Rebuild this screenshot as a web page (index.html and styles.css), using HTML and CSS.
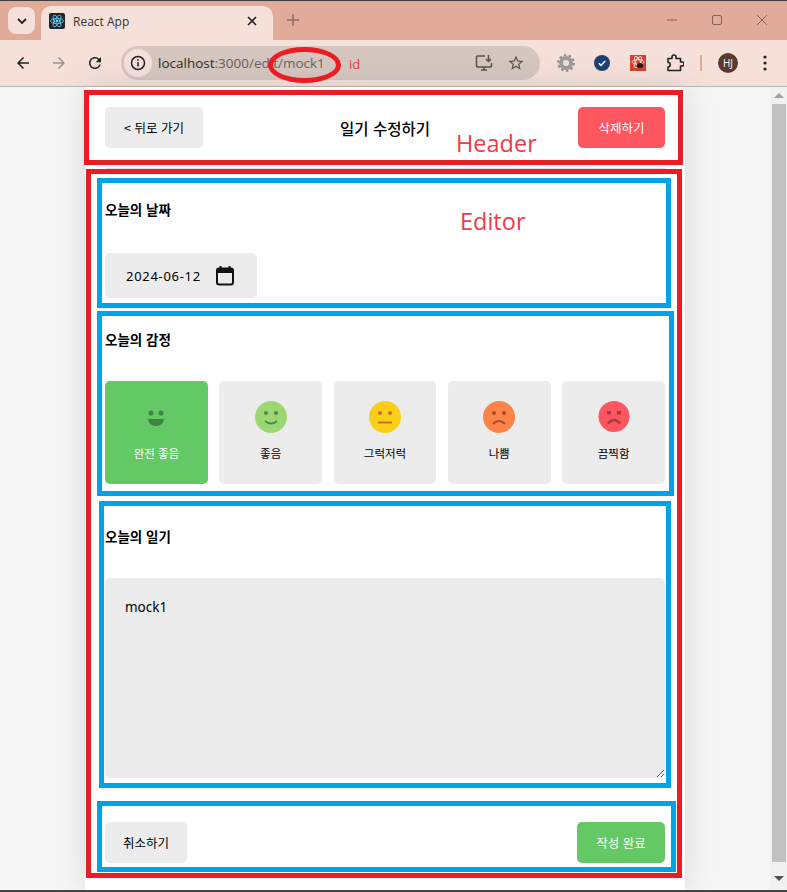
FILE: index.html
```html
<!doctype html>
<html lang="ko">
<head>
    <meta charset="UTF-8">
    <meta name="viewport" content="width=device-width, initial-scale=1.0">
    <title>React App</title>
    <link rel="stylesheet" href="styles.css">
</head>
<body>
    <div class="tabstrip">
        <div class="tab-search">
            <svg width="12" height="12" viewBox="0 0 12 12"><path d="M2 4l4 4 4-4" fill="none" stroke="#222" stroke-width="1.8"/></svg>
        </div>
        <div class="tab">
            <svg class="tab-icon" width="16" height="16" viewBox="0 0 16 16">
                <rect width="16" height="16" rx="2" fill="#20232a"/>
                <g fill="none" stroke="#61dafb" stroke-width="0.8">
                    <ellipse cx="8" cy="8" rx="6.5" ry="2.6"/>
                    <ellipse cx="8" cy="8" rx="6.5" ry="2.6" transform="rotate(60 8 8)"/>
                    <ellipse cx="8" cy="8" rx="6.5" ry="2.6" transform="rotate(120 8 8)"/>
                </g>
                <circle cx="8" cy="8" r="1.4" fill="#61dafb"/>
            </svg>
            <span class="tab-title">React App</span>
            <svg width="10" height="10" viewBox="0 0 10 10"><path d="M1 1l8 8M9 1l-8 8" stroke="#222" stroke-width="1.6"/></svg>
        </div>
        <svg class="new-tab" width="12" height="12" viewBox="0 0 12 12"><path d="M6 0v12M0 6h12" stroke="#8b6f66" stroke-width="1.5"/></svg>
        <div class="window-controls">
            <svg width="12" height="12" viewBox="0 0 12 12"><path d="M1 6h10" stroke="#80635a"/></svg>
            <svg width="12" height="12" viewBox="0 0 12 12"><rect x="1.5" y="1.5" width="9" height="9" rx="1.5" fill="none" stroke="#80635a"/></svg>
            <svg width="12" height="12" viewBox="0 0 12 12"><path d="M1 1l10 10M11 1L1 11" stroke="#80635a"/></svg>
        </div>
    </div>

    <div class="toolbar">
        <svg width="18" height="18" viewBox="0 0 24 24"><path fill="#222" d="M20 11H7.83l5.59-5.59L12 4l-8 8 8 8 1.41-1.41L7.83 13H20z"/></svg>
        <svg width="18" height="18" viewBox="0 0 24 24"><path fill="#9a8f8a" d="M4 11h12.17l-5.59-5.59L12 4l8 8-8 8-1.41-1.41L16.17 13H4z"/></svg>
        <svg width="18" height="18" viewBox="0 0 24 24"><path fill="#222" d="M17.65 6.35A7.958 7.958 0 0 0 12 4c-4.42 0-7.99 3.58-7.99 8s3.57 8 7.99 8c3.73 0 6.84-2.55 7.73-6h-2.08A5.99 5.99 0 0 1 12 18c-3.31 0-6-2.69-6-6s2.69-6 6-6c1.66 0 3.14.69 4.22 1.78L13 11h7V4l-2.35 2.35z"/></svg>

        <div class="omnibox">
            <div class="site-info">
                <svg width="16" height="16" viewBox="0 0 16 16">
                    <circle cx="8" cy="8" r="6.5" fill="none" stroke="#222" stroke-width="1.5"/>
                    <path d="M8 7v4.5" stroke="#222" stroke-width="1.5"/>
                    <circle cx="8" cy="4.9" r="0.9" fill="#222"/>
                </svg>
            </div>
            <div class="url"><span class="url-host">localhost</span>:3000/edit/mock1</div>
            <svg class="omni-icon" width="18" height="18" viewBox="0 0 18 18">
                <path d="M10 2H2.5A1 1 0 0 0 1.500 3v9a1 1 0 0 0 1 1h13a1 1 0 0 0 1-1V9" fill="none" stroke="#555" stroke-width="1.5"/>
                <path d="M6 16h6M9 13v3" stroke="#555" stroke-width="1.5"/>
                <path d="M13.500 1v6M11 5l2.500 2.500L16 5" fill="none" stroke="#555" stroke-width="1.500"/>
            </svg>
            <svg class="omni-icon star" width="18" height="18" viewBox="0 0 24 24"><path fill="#555" d="M22 9.24l-7.19-.62L12 2 9.190 8.630 2 9.240l5.460 4.730L5.820 21 12 17.270 18.180 21l-1.630-7.030L22 9.240zM12 15.400l-3.760 2.270 1-4.280-3.320-2.880 4.380-.38L12 6.100l1.710 4.040 4.380.38-3.320 2.880 1 4.280L12 15.400z"/></svg>
        </div>

        <div class="extensions">
            <svg width="18" height="18" viewBox="0 0 18 18">
                <circle cx="9" cy="9" r="7.800" fill="none" stroke="#8a8a8a" stroke-width="2" stroke-dasharray="2.500 2.400"/>
                <circle cx="9" cy="9" r="5" fill="none" stroke="#9b9b9b" stroke-width="4"/>
                <circle cx="9" cy="9" r="2.600" fill="#e4e0de"/>
            </svg>
            <svg width="16" height="16" viewBox="0 0 16 16">
                <circle cx="8" cy="8" r="8" fill="#1a4272"/>
                <path d="M4.800 8.200l2.200 2.200 4.200-4.400" fill="none" stroke="#fff" stroke-width="1.500"/>
            </svg>
            <svg width="16" height="16" viewBox="0 0 16 16">
                <rect width="16" height="16" fill="#d8402f"/>
                <g fill="none" stroke="#fbe4dc" stroke-width="0.9">
                    <ellipse cx="8" cy="7" rx="6" ry="2.400"/>
                    <ellipse cx="8" cy="7" rx="6" ry="2.400" transform="rotate(60 8 7)"/>
                    <ellipse cx="8" cy="7" rx="6" ry="2.400" transform="rotate(120 8 7)"/>
                </g>
                <ellipse cx="10" cy="10.500" rx="3.200" ry="2.600" fill="#2e1712"/>
            </svg>
            <svg width="18" height="18" viewBox="0 0 18 18"><path d="M2 4.500h4V3a2 2 0 0 1 4 0v1.500h4.500V8H16a2 2 0 0 1 0 4h-1.500v4.500H2V13a2 2 0 0 0 0-4.500z" fill="none" stroke="#222" stroke-width="1.600" stroke-linejoin="round"/></svg>
            <span class="ext-divider"></span>
            <span class="avatar">HJ</span>
            <svg width="4" height="16" viewBox="0 0 4 16"><circle cx="2" cy="2" r="1.600" fill="#222"/><circle cx="2" cy="8" r="1.600" fill="#222"/><circle cx="2" cy="14" r="1.600" fill="#222"/></svg>
        </div>
    </div>

    <div class="viewport">
        <div class="page">
            <header class="diary-header">
                <button class="btn btn-back">&lt; 뒤로 가기</button>
                <h1 class="header-title">일기 수정하기</h1>
                <button class="btn btn-negative">삭제하기</button>
            </header>

            <section class="editor-section date-section">
                <h4 class="section-title">오늘의 날짜</h4>
                <div class="date-input">
                    <span>2024-06-12</span>
                    <svg width="18" height="20" viewBox="0 0 18 20">
                        <path d="M4.500 0v3M13.500 0v3" stroke="#111" stroke-width="2"/>
                        <rect x="1" y="2.500" width="16" height="16" rx="2" fill="none" stroke="#111" stroke-width="2"/>
                        <rect x="1" y="2.500" width="16" height="4.500" fill="#111"/>
                    </svg>
                </div>
            </section>

            <section class="editor-section">
                <h4 class="section-title">오늘의 감정</h4>
                <div class="emotion-list">
                    <div class="emotion emotion-on">
                        <svg width="32" height="32" viewBox="0 0 32 32">
                            <circle cx="11" cy="12" r="2.500" fill="#3f8245"/>
                            <circle cx="21" cy="12" r="2.500" fill="#3f8245"/>
                            <path d="M8 18h16a8 7 0 0 1-16 0z" fill="#3f8245"/>
                        </svg>
                        <span>완전 좋음</span>
                    </div>
                    <div class="emotion">
                        <svg width="32" height="32" viewBox="0 0 32 32">
                            <circle cx="16" cy="16" r="16" fill="#9dd772"/>
                            <circle cx="11" cy="12" r="2" fill="#4c8a4c"/>
                            <circle cx="21" cy="12" r="2" fill="#4c8a4c"/>
                            <path d="M10 20q6 5 12 0" fill="none" stroke="#4c8a4c" stroke-width="2"/>
                        </svg>
                        <span>좋음</span>
                    </div>
                    <div class="emotion">
                        <svg width="32" height="32" viewBox="0 0 32 32">
                            <circle cx="16" cy="16" r="16" fill="#fdce17"/>
                            <circle cx="11" cy="12" r="2" fill="#c0713a"/>
                            <circle cx="21" cy="12" r="2" fill="#c0713a"/>
                            <path d="M9 21.500h14" stroke="#c0713a" stroke-width="2"/>
                        </svg>
                        <span>그럭저럭</span>
                    </div>
                    <div class="emotion">
                        <svg width="32" height="32" viewBox="0 0 32 32">
                            <circle cx="16" cy="16" r="16" fill="#fd8446"/>
                            <circle cx="11" cy="12" r="2" fill="#a94a3a"/>
                            <circle cx="21" cy="12" r="2" fill="#a94a3a"/>
                            <path d="M10 23q6-6 12 0" fill="none" stroke="#a94a3a" stroke-width="2"/>
                        </svg>
                        <span>나쁨</span>
                    </div>
                    <div class="emotion">
                        <svg width="32" height="32" viewBox="0 0 32 32">
                            <circle cx="16" cy="15.500" r="15.500" fill="#fd565f"/>
                            <rect x="9" y="10" width="4" height="3.500" fill="#a93a42"/>
                            <rect x="19" y="10" width="4" height="3.500" fill="#a93a42"/>
                            <path d="M10 22.500q6-7 12 0" fill="none" stroke="#a93a42" stroke-width="2.500"/>
                        </svg>
                        <span>끔찍함</span>
                    </div>
                </div>
            </section>

            <section class="editor-section content-section">
                <h4 class="section-title">오늘의 일기</h4>
                <textarea class="content-input">mock1</textarea>
            </section>

            <section class="editor-actions">
                <button class="btn btn-cancel">취소하기</button>
                <button class="btn btn-positive">작성 완료</button>
            </section>
        </div>

        <div class="scrollbar">
            <span class="arrow-up"></span>
            <div class="thumb"></div>
            <span class="arrow-down"></span>
        </div>
    </div>

    <!-- annotations drawn on top of the capture -->
    <div class="mark mark-red mark-header"></div>
    <div class="mark mark-red mark-editor"></div>
    <div class="mark mark-blue mark-date"></div>
    <div class="mark mark-blue mark-emotion"></div>
    <div class="mark mark-blue mark-content"></div>
    <div class="mark mark-blue mark-actions"></div>
    <div class="mark mark-red mark-id"></div>
    <span class="note note-id">id</span>
    <span class="note note-header">Header</span>
    <span class="note note-editor">Editor</span>
</body>
</html>
```

FILE: styles.css
```css
* {
    box-sizing: border-box;
}
html, body {
    margin: 0;
    height: 892px;
    overflow: hidden;
}
body {
    display: flex;
    flex-direction: column;
    position: relative;
    background: #f6f6f6;
    border-top: 1px solid #3c3c3c;
    border-bottom: 2px solid #444;
    font-family: "Noto Sans CJK KR", "Noto Sans", sans-serif;
}

/* browser chrome */
.tabstrip {
    display: flex;
    align-items: flex-end;
    height: 39px;
    padding-left: 8px;
    background: #e2aa98;
}
.tab-search {
    display: flex;
    align-items: center;
    justify-content: center;
    width: 27px;
    height: 27px;
    margin-bottom: 6px;
    border-radius: 8px;
    background: #f6e1da;
}
.tab {
    display: flex;
    align-items: center;
    width: 232px;
    height: 34px;
    margin-left: 6px;
    padding: 0 16px 4px 8px;
    border-radius: 10px 10px 0 0;
    background: #f6e1da;
}
.tab-title {
    flex: 1;
    margin-left: 8px;
    font-family: "Open Sans", sans-serif;
    font-size: 12px;
    color: #333;
}
.new-tab {
    margin: 0 0 14px 14px;
}
.window-controls {
    display: flex;
    gap: 33px;
    margin: 0 19px 14px auto;
}
.toolbar {
    display: flex;
    align-items: center;
    gap: 18px;
    height: 47px;
    padding-left: 14px;
    background: #f6e1da;
    border-bottom: 1px solid #bdb5b1;
}
.omnibox {
    display: flex;
    align-items: center;
    width: 419px;
    height: 34px;
    margin-left: -1px;
    padding: 0 15px 0 3px;
    border-radius: 17px;
    background: #d5c6bf;
}
.site-info {
    display: flex;
    align-items: center;
    justify-content: center;
    width: 28px;
    height: 28px;
    border-radius: 50%;
    background: #f6e1da;
}
.url {
    flex: 1;
    margin-left: 6px;
    font-family: "Open Sans", sans-serif;
    font-size: 13.5px;
    color: #6a605c;
}
.url-host {
    color: #2e2a28;
}
.omni-icon.star {
    margin-left: 14px;
}
.extensions {
    display: flex;
    align-items: center;
    margin-left: -1px;
}
.extensions svg:nth-child(1) { margin-right: 19px; }
.extensions svg:nth-child(2) { margin-right: 20px; }
.extensions svg:nth-child(3) { margin-right: 20px; }
.extensions svg:nth-child(4) { margin-right: 16px; }
.ext-divider {
    width: 2px;
    height: 16px;
    margin-right: 16px;
    background: #e2aa98;
}
.avatar {
    display: flex;
    align-items: center;
    justify-content: center;
    width: 20px;
    height: 20px;
    margin-right: 25px;
    border-radius: 50%;
    background: #5a3a30;
    color: #fff;
    font-family: "Open Sans", sans-serif;
    font-size: 10px;
}

/* page */
.viewport {
    flex: 1;
    display: flex;
    min-height: 0;
    background: #f6f6f6;
}
.page {
    width: 600px;
    margin-left: 85px;
    padding: 0 20px;
    background: #fff;
    box-shadow: rgba(100, 100, 100, 0.2) 0 0 29px;
}
.scrollbar {
    display: flex;
    flex-direction: column;
    align-items: center;
    width: 17px;
    margin-left: auto;
    background: #f1f1f1;
}
.arrow-up {
    margin: 6px 0;
    border: 5px solid transparent;
    border-top: 0;
    border-bottom: 5px solid #a3a3a3;
}
.thumb {
    width: 14px;
    height: 758px;
    background: #c1c1c1;
}
.arrow-down {
    margin-top: 14px;
    border: 5px solid transparent;
    border-bottom: 0;
    border-top: 5px solid #505050;
}
.diary-header {
    display: grid;
    grid-template-columns: 1fr auto 1fr;
    align-items: center;
    padding: 20px 0;
    border-bottom: 1px solid #e2e2e2;
}
.diary-header .btn-back {
    justify-self: start;
}
.diary-header .btn-negative {
    justify-self: end;
}
.header-title {
    margin: 0;
    font-size: 15.500px;
    font-weight: 500;
    color: #000;
}
.btn {
    height: 41px;
    padding: 0;
    border: 0;
    border-radius: 5px;
    background: #ececec;
    font-family: inherit;
    font-size: 12.500px;
    color: #000;
}
.btn-back { width: 98px; }
.btn-cancel { width: 82px; }
.btn-negative {
    width: 87px;
    background: #fd565f;
    color: #fff;
}
.btn-positive {
    width: 88px;
    background: #64c964;
    color: #fff;
}
.editor-section {
    margin-bottom: 39px;
}
.date-section {
    margin-bottom: 28px;
    padding-top: 27px;
}
.content-section {
    margin-bottom: 44px;
}
.section-title {
    height: 28px;
    margin: 0 0 27px;
    font-size: 13.500px;
    font-weight: 700;
    line-height: 26px;
    color: #000;
}
.date-section .section-title {
    margin-bottom: 29px;
}
.date-input {
    display: flex;
    align-items: center;
    justify-content: space-between;
    width: 152px;
    height: 45px;
    padding: 0 23px 0 21px;
    border-radius: 5px;
    background: #ececec;
    font-family: "Noto Sans", sans-serif;
    font-size: 13px;
    letter-spacing: 0.7px;
}
.emotion-list {
    display: grid;
    grid-template-columns: repeat(5, 1fr);
    gap: 11.500px;
}
.emotion {
    display: flex;
    flex-direction: column;
    align-items: center;
    height: 103px;
    padding-top: 20px;
    border-radius: 5px;
    background: #ececec;
    font-size: 11.500px;
    color: #000;
}
.emotion span {
    margin-top: 12px;
}
.emotion-on {
    background: #64c964;
    color: #fff;
}
.content-input {
    display: block;
    width: 100%;
    height: 200px;
    padding: 20px;
    border: 0;
    border-radius: 5px;
    outline: 0;
    background: #ececec;
    font-family: "Noto Sans", sans-serif;
    font-size: 13.500px;
    color: #000;
}
.editor-actions {
    display: flex;
    justify-content: space-between;
}

/* annotations */
.mark {
    position: absolute;
    border-style: solid;
    border-width: 5px;
}
.mark-red { border-color: #ed1c24; }
.mark-blue { border-color: #00a2e8; }
.mark-header { left: 84px; top: 89px; width: 599px; height: 75px; }
.mark-editor { left: 86px; top: 168px; width: 596px; height: 709px; }
.mark-date { left: 97px; top: 177px; width: 574px; height: 130px; }
.mark-emotion { left: 97px; top: 310px; width: 577px; height: 185px; }
.mark-content { left: 99px; top: 500px; width: 572px; height: 287px; }
.mark-actions { left: 97px; top: 800px; width: 579px; height: 71px; }
.mark-id {
    left: 268px;
    top: 46px;
    width: 73px;
    height: 36px;
    border-width: 5px;
    border-radius: 50%;
}
.note {
    position: absolute;
    color: #ee3a47;
    font-family: "Open Sans", sans-serif;
    font-size: 23.500px;
    line-height: 30px;
}
.note-id { left: 349px; top: 48px; font-size: 13px; }
.note-header { left: 456px; top: 127px; }
.note-editor { left: 460px; top: 205px; }
```
